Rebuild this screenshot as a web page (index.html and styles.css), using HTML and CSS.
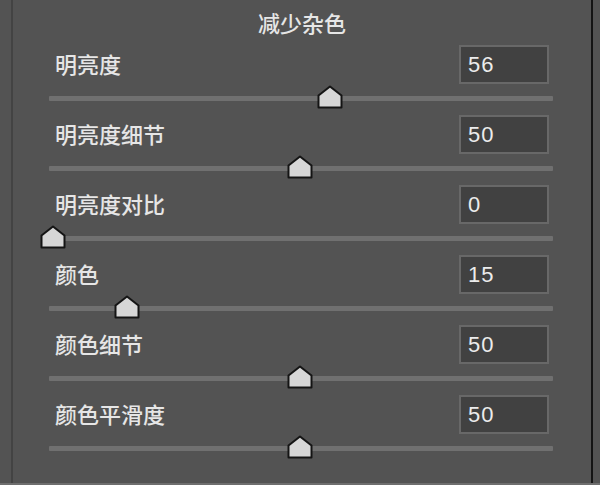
FILE: index.html
```html
<!DOCTYPE html>
<html lang="zh">
<head>
<meta charset="utf-8">
<link rel="stylesheet" href="styles.css">
</head>
<body>
<div class="panel">
  <div class="title">减少杂色</div>
  <div class="row">
    <div class="head"><span class="label">明亮度</span><div class="box">56</div></div>
    <div class="slider"><div class="track"></div><svg class="thumb" style="--v:56" viewBox="0 0 26 24" width="26" height="24"><path d="M1.5 10.5 L13 1.5 L24.5 10.5 L24.5 22.5 L1.5 22.5 Z"/></svg></div>
  </div>
  <div class="row">
    <div class="head"><span class="label">明亮度细节</span><div class="box">50</div></div>
    <div class="slider"><div class="track"></div><svg class="thumb" style="--v:50" viewBox="0 0 26 24" width="26" height="24"><path d="M1.5 10.5 L13 1.5 L24.5 10.5 L24.5 22.5 L1.5 22.5 Z"/></svg></div>
  </div>
  <div class="row">
    <div class="head"><span class="label">明亮度对比</span><div class="box">0</div></div>
    <div class="slider"><div class="track"></div><svg class="thumb" style="--v:0" viewBox="0 0 26 24" width="26" height="24"><path d="M1.5 10.5 L13 1.5 L24.5 10.5 L24.5 22.5 L1.5 22.5 Z"/></svg></div>
  </div>
  <div class="row">
    <div class="head"><span class="label">颜色</span><div class="box">15</div></div>
    <div class="slider"><div class="track"></div><svg class="thumb" style="--v:15" viewBox="0 0 26 24" width="26" height="24"><path d="M1.5 10.5 L13 1.5 L24.5 10.5 L24.5 22.5 L1.5 22.5 Z"/></svg></div>
  </div>
  <div class="row">
    <div class="head"><span class="label">颜色细节</span><div class="box">50</div></div>
    <div class="slider"><div class="track"></div><svg class="thumb" style="--v:50" viewBox="0 0 26 24" width="26" height="24"><path d="M1.5 10.5 L13 1.5 L24.5 10.5 L24.5 22.5 L1.5 22.5 Z"/></svg></div>
  </div>
  <div class="row">
    <div class="head"><span class="label">颜色平滑度</span><div class="box">50</div></div>
    <div class="slider"><div class="track"></div><svg class="thumb" style="--v:50" viewBox="0 0 26 24" width="26" height="24"><path d="M1.5 10.5 L13 1.5 L24.5 10.5 L24.5 22.5 L1.5 22.5 Z"/></svg></div>
  </div>
</div>
</body>
</html>
```
FILE: styles.css
```css
html, body {
  margin: 0;
  padding: 0;
  background: #535353;
  width: 600px;
  height: 485px;
  overflow: hidden;
}
body {
  font-family: "Noto Sans CJK SC", "Noto Sans", sans-serif;
  color: #e6e6e6;
  border-bottom: 2px solid #6e6e6e;
  box-sizing: border-box;
}
.panel {
  margin-left: 11px;
  width: 582px;
  height: 483px;
  box-sizing: border-box;
  border-left: 2px solid #434343;
  border-right: 2px solid #141414;
  padding-left: 36px;
}
.title {
  width: 504px;
  height: 45px;
  line-height: 44px;
  text-align: center;
  font-size: 22px;
  font-weight: 500;
  padding-left: 2px;
  box-sizing: border-box;
}
.row {
  width: 504px;
}
.head {
  height: 40px;
  display: flex;
  align-items: center;
  justify-content: space-between;
  padding: 0 4px 0 6px;
}
.label {
  font-size: 22px;
  font-weight: 500;
  line-height: 40px;
  margin-top: -4px;
}
.box {
  width: 90px;
  height: 39px;
  box-sizing: border-box;
  border: 2px solid #686868;
  background: #414141;
  font-family: "Liberation Sans", Arial, sans-serif;
  font-size: 22px;
  letter-spacing: 1px;
  line-height: 35px;
  padding-left: 7px;
  color: #ececec;
  align-self: flex-start;
}
.slider {
  position: relative;
  height: 30px;
}
.track {
  position: relative;
  top: 11px;
  height: 5px;
  background: #707070;
  border-radius: 1px;
}
.thumb {
  position: absolute;
  top: 0;
  left: calc(var(--v) * 4.94px - 9px);
  display: block;
}
.thumb path {
  fill: #d6d6d6;
  stroke: #141414;
  stroke-width: 2;
  stroke-linejoin: round;
}
```
